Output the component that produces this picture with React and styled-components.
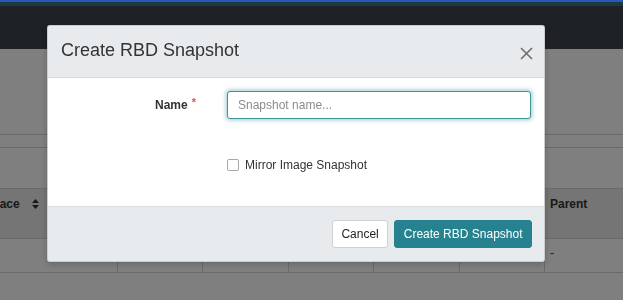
import React from 'react'
import styled, { createGlobalStyle } from 'styled-components'

const GlobalStyle = createGlobalStyle`
  html, body {
    margin: 0;
    height: 100%;
    overflow: hidden;
    background: #fff;
    font-family: 'Liberation Sans', Arial, sans-serif;
    font-size: 12px;
    color: #333;
  }
`

const Page = styled.div`
  height: 100vh;
  display: flex;
  flex-direction: column;
`

const Navbar = styled.header`
  position: relative;
  z-index: 1051;
  height: 49px;
  display: flex;
  flex-direction: column;
  background: #1e2226;
`

const Stripe = styled.div`
  height: ${p => p.$h}px;
  background: ${p => p.$color};
`

const Content = styled.main`
  flex: 1;
  padding-top: 85px;
`

const TabLine = styled.div`
  height: 12px;
  border-top: 1px solid #d4d4d4;
  border-bottom: 1px solid #d4d4d4;
`

const Table = styled.div`
  margin-top: 40px;
  margin-left: -52px;
  border-top: 1px solid #d4d4d4;
`

const Row = styled.div`
  display: grid;
  grid-template-columns: 170px repeat(5, 85.4px) 1fr;
  height: ${p => p.$h}px;
  background: ${p => (p.$head ? '#ebebeb' : 'transparent')};
  border-bottom: 1px solid #d4d4d4;
`

const Cell = styled.div`
  padding: ${p => (p.$head ? '8px' : '7px')} 5px 0;
  border-right: ${p => (p.$lined ? '1px solid #d4d4d4' : 'none')};
  font-weight: ${p => (p.$head ? 700 : 400)};
  color: #333;
  line-height: 14px;
  display: flex;
  align-items: flex-start;
  gap: 12px;
  white-space: nowrap;
`

const SortIcon = () => (
  <svg width="7" height="10" viewBox="0 0 7 10" style={{ marginTop: 2 }}>
    <path d="M3.5 0 L7 4 L0 4 Z M0 6 L7 6 L3.5 10 Z" fill="#333" />
  </svg>
)

const Backdrop = styled.div`
  position: fixed;
  inset: 0;
  z-index: 1050;
  background: rgba(0, 0, 0, 0.5);
`

const ModalLayer = styled.div`
  position: fixed;
  inset: 0;
  z-index: 1060;
  padding: 25px 0 0 47px;
`

const Dialog = styled.div`
  width: 498px;
  box-sizing: border-box;
  background: #fff;
  border: 1px solid rgba(0, 0, 0, 0.2);
  border-radius: 3px;
  overflow: hidden;
  box-shadow: 0 2px 6px rgba(0, 0, 0, 0.2);
`

const Header = styled.div`
  height: 51px;
  background: #e8ebee;
  border-bottom: 1px solid #d6d9dc;
  display: flex;
  align-items: center;
  justify-content: space-between;
  padding: 0 11px 0 13px;
`

const Title = styled.h4`
  margin: 0;
  font-size: 18px;
  font-weight: 400;
  color: #333;
  padding-bottom: 2px;
`

const CloseButton = styled.button`
  border: 0;
  background: none;
  padding: 0;
  margin-top: 3px;
  width: 14px;
  height: 14px;
  display: flex;
  align-items: center;
  justify-content: center;
  cursor: pointer;
`

const Body = styled.div`
  height: 128px;
  box-sizing: border-box;
  padding: 13px 13px 0;
  display: flex;
  flex-direction: column;
  gap: 39px;
`

const FormRow = styled.div`
  display: grid;
  grid-template-columns: 135px 1fr;
  column-gap: 31px;
  align-items: center;
`

const Label = styled.label`
  text-align: right;
  font-weight: 700;
  font-size: 12px;
  color: #333;
`

const Required = styled.span`
  color: #d9534f;
  margin-left: 4px;
  position: relative;
  top: -3px;
  font-size: 11px;
`

const Input = styled.input`
  box-sizing: border-box;
  height: 28px;
  width: 304px;
  padding: 0 10px;
  font-family: inherit;
  font-size: 12px;
  color: #333;
  border: 1px solid #3f949d;
  border-radius: 3px;
  outline: none;
  caret-color: #333;
  box-shadow: 0 0 4px 1px rgba(37, 130, 142, 0.45);
  &::placeholder {
    color: #8c8c8c;
  }
`

const CheckRow = styled.label`
  display: flex;
  align-items: center;
  gap: 6px;
  font-size: 12px;
  color: #333;
`

const Box = styled.span`
  width: 10px;
  height: 10px;
  border: 1px solid #a8a8a8;
  border-radius: 2px;
  background: #fff;
`

const Footer = styled.div`
  height: 55px;
  box-sizing: border-box;
  background: #e8ebee;
  border-top: 1px solid #dcdfe2;
  display: flex;
  align-items: center;
  justify-content: flex-end;
  gap: 6px;
  padding: 0 12px 1px;
`

const Button = styled.button`
  height: 28px;
  box-sizing: border-box;
  padding: 0 ${p => (p.$primary ? 8.5 : 8.5)}px;
  font-family: inherit;
  font-size: 12px;
  border-radius: 3px;
  border: 1px solid ${p => (p.$primary ? '#25828e' : '#d0d0d0')};
  background: ${p => (p.$primary ? '#25828e' : '#fff')};
  color: ${p => (p.$primary ? '#fff' : '#222')};
  cursor: pointer;
`

const columns = ['', '', '', '', '']

export default function App() {
  return (
    <>
      <GlobalStyle />
      <Page>
        <Navbar>
          <Stripe $h={2} $color="#2c58bb" />
          <Stripe $h={4} $color="#1a3b41" />
        </Navbar>
        <Content>
          <TabLine />
          <Table>
            <Row $head $h={49}>
              <Cell $head>
                Namespace <SortIcon />
              </Cell>
              {columns.map((c, i) => (
                <Cell $head key={i}>{c}</Cell>
              ))}
              <Cell $head>Parent</Cell>
            </Row>
            <Row $h={33}>
              <Cell $lined />
              {columns.map((c, i) => (
                <Cell $lined key={i} />
              ))}
              <Cell>-</Cell>
            </Row>
          </Table>
        </Content>
      </Page>
      <Backdrop />
      <ModalLayer>
        <Dialog>
          <Header>
            <Title>Create RBD Snapshot</Title>
            <CloseButton aria-label="Close">
              <svg width="13" height="13" viewBox="0 0 13 13">
                <path d="M1 1 L12 12 M12 1 L1 12" stroke="#6e6e6e" strokeWidth="1.6" />
              </svg>
            </CloseButton>
          </Header>
          <Body>
            <FormRow>
              <Label>
                Name<Required>*</Required>
              </Label>
              <Input placeholder="Snapshot name..." autoFocus />
            </FormRow>
            <FormRow>
              <span />
              <CheckRow>
                <Box />
                Mirror Image Snapshot
              </CheckRow>
            </FormRow>
          </Body>
          <Footer>
            <Button>Cancel</Button>
            <Button $primary>Create RBD Snapshot</Button>
          </Footer>
        </Dialog>
      </ModalLayer>
    </>
  )
}
